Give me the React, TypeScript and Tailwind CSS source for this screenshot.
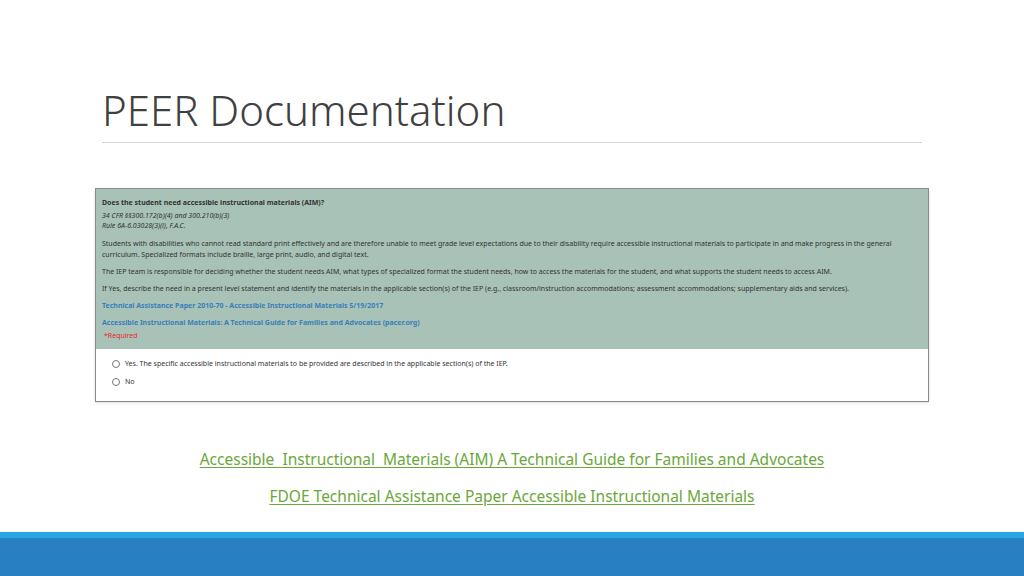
export default function App() {
  return (
    <div className="relative flex h-[576px] w-[1024px] flex-col overflow-hidden bg-white font-['Open_Sans',sans-serif]">
      <div className="mx-[102px] mt-[84px] border-b border-[#d4d4d4] pb-[6px]">
        <h1 className="text-[42px] font-light leading-[52px] text-[#404040]">PEER Documentation</h1>
      </div>

      <div className="mx-[95px] mt-[45px] h-[214px] border border-[#8a8a8a] font-['Liberation_Sans',sans-serif] text-[7px] text-[#333] shadow-sm">
        <div className="flex h-[160px] flex-col bg-[#a8c2b7] px-[6px] pt-[9px]">
          <p className="font-bold leading-[10px]">Does the student need accessible instructional materials (AIM)?</p>
          <p className="mt-[3px] italic leading-[10px]">34 CFR §§300.172(b)(4) and 300.210(b)(3)</p>
          <p className="italic leading-[10px]">Rule 6A-6.03028(3)(i), F.A.C.</p>
          <p className="mt-[7px] leading-[11px]">
            Students with disabilities who cannot read standard print effectively and are therefore unable to meet grade level expectations due to their disability require accessible instructional materials to participate in and make progress in the general curriculum. Specialized formats include braille, large print, audio, and digital text.
          </p>
          <p className="mt-[6px] leading-[11px]">
            The IEP team is responsible for deciding whether the student needs AIM, what types of specialized format the student needs, how to access the materials for the student, and what supports the student needs to access AIM.
          </p>
          <p className="mt-[6px] leading-[11px]">
            If Yes, describe the need in a present level statement and identify the materials in the applicable section(s) of the IEP (e.g., classroom/instruction accommodations; assessment accommodations; supplementary aids and services).
          </p>
          <p className="mt-[6px] font-bold leading-[11px] text-[#3a7fb8]">Technical Assistance Paper 2010-70 - Accessible Instructional Materials 5/19/2017</p>
          <p className="mt-[6px] font-bold leading-[11px] text-[#3a7fb8]">Accessible Instructional Materials: A Technical Guide for Families and Advocates (pacer.org)</p>
          <p className="ml-[2px] mt-[2px] leading-[11px] text-[#e8292c]">*Required</p>
        </div>
        <div className="flex flex-col gap-[7px] px-[16px] pt-[10px]">
          <label className="flex items-center gap-[5px]">
            <span className="h-[8px] w-[8px] rounded-full border border-[#777] bg-white" />
            Yes. The specific accessible instructional materials to be provided are described in the applicable section(s) of the IEP.
          </label>
          <label className="flex items-center gap-[5px]">
            <span className="h-[8px] w-[8px] rounded-full border border-[#777] bg-white" />
            No
          </label>
        </div>
      </div>

      <div className="mt-[46px] flex flex-col items-center gap-[14px] font-['Open_Sans',sans-serif] text-[15.5px] text-[#6aa83a]">
        <a className="whitespace-pre underline underline-offset-2">Accessible  Instructional  Materials (AIM) A Technical Guide for Families and Advocates</a>
        <a className="underline underline-offset-2">FDOE Technical Assistance Paper Accessible Instructional Materials</a>
      </div>

      <div className="mt-auto">
        <div className="h-[6px] bg-[#2aa7e2]" />
        <div className="h-[38px] bg-[#2880c3]" />
      </div>
    </div>
  );
}
